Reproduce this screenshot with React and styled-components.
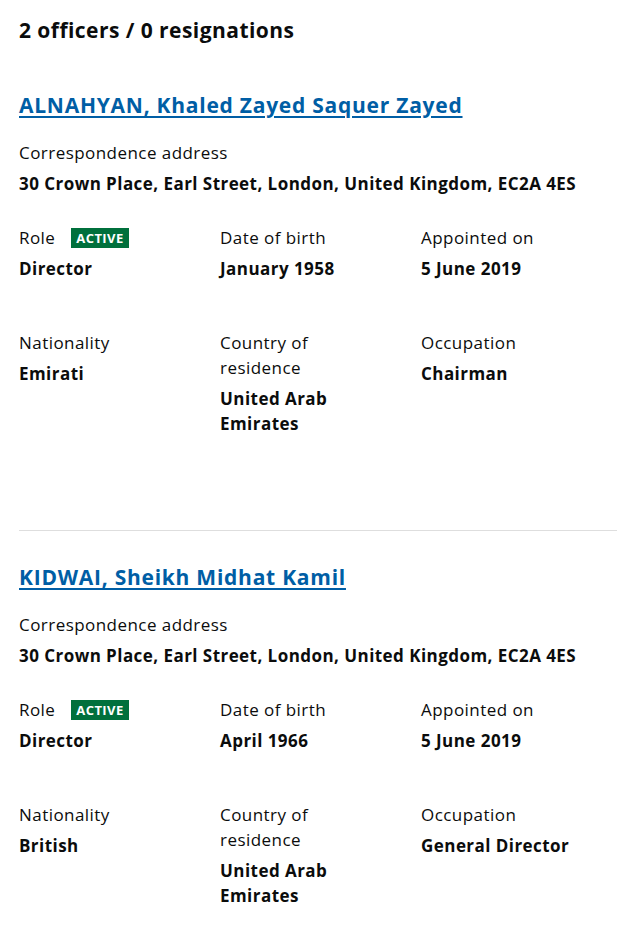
import React from 'react';
import styled, { createGlobalStyle } from 'styled-components';

const GlobalStyle = createGlobalStyle`
  html, body {
    margin: 0;
    padding: 0;
    background: #fff;
  }
  body {
    font-family: 'Open Sans', 'Liberation Sans', sans-serif;
    color: #0b0c0c;
    letter-spacing: 0.45px;
  }
`;

const Page = styled.div`
  width: 617px;
  padding-left: 19px;
  box-sizing: border-box;
`;

const Heading = styled.h2`
  margin: 0;
  padding-top: 15px;
  font-size: 21px;
  line-height: 30px;
  font-weight: 700;
`;

const Officer = styled.section`
  padding-top: ${(p) => (p.first ? '45px' : '31px')};
  padding-bottom: ${(p) => (p.last ? '24px' : '94px')};
  border-bottom: ${(p) => (p.last ? 'none' : '1px solid #dedede')};
`;

const Name = styled.a`
  display: inline-block;
  font-size: 21px;
  line-height: 30px;
  font-weight: 700;
  letter-spacing: 0.75px;
  color: #005ea5;
  text-decoration: underline;
  text-decoration-thickness: 2px;
  text-underline-offset: 3px;
`;

const Label = styled.div`
  font-size: 17px;
  line-height: 25px;
  font-weight: 400;
  display: flex;
  align-items: center;
`;

const Value = styled.div`
  margin-top: 6px;
  font-size: 17px;
  line-height: 25px;
  font-weight: 700;
`;

const Address = styled.div`
  margin-top: 20px;
`;

const Grid = styled.div`
  display: grid;
  grid-template-columns: 201px 201px 196px;
  row-gap: 49px;
  margin-top: 29px;
`;

const Cell = styled.div`
  max-width: 160px;
`;

const Badge = styled.span`
  display: inline-block;
  margin-left: 16px;
  padding: 0 5px;
  background: #00703c;
  color: #fff;
  font-size: 13px;
  line-height: 20px;
  font-weight: 700;
  letter-spacing: 0.4px;
  text-transform: uppercase;
`;

const officers = [
  {
    name: 'ALNAHYAN, Khaled Zayed Saquer Zayed',
    dob: 'January 1958',
    nationality: 'Emirati',
    residence: 'United Arab Emirates',
    occupation: 'Chairman',
  },
  {
    name: 'KIDWAI, Sheikh Midhat Kamil',
    dob: 'April 1966',
    nationality: 'British',
    residence: 'United Arab Emirates',
    occupation: 'General Director',
  },
];

function Field({ label, value, badge }) {
  return (
    <Cell>
      <Label>
        {label}
        {badge && <Badge>{badge}</Badge>}
      </Label>
      <Value>{value}</Value>
    </Cell>
  );
}

export default function App() {
  return (
    <Page>
      <GlobalStyle />
      <Heading>2 officers / 0 resignations</Heading>
      {officers.map((o, i) => (
        <Officer key={o.name} first={i === 0} last={i === officers.length - 1}>
          <Name href="#">{o.name}</Name>
          <Address>
            <Label>Correspondence address</Label>
            <Value>30 Crown Place, Earl Street, London, United Kingdom, EC2A 4ES</Value>
          </Address>
          <Grid>
            <Field label="Role" value="Director" badge="Active" />
            <Field label="Date of birth" value={o.dob} />
            <Field label="Appointed on" value="5 June 2019" />
            <Field label="Nationality" value={o.nationality} />
            <Field label="Country of residence" value={o.residence} />
            <Field label="Occupation" value={o.occupation} />
          </Grid>
        </Officer>
      ))}
    </Page>
  );
}
